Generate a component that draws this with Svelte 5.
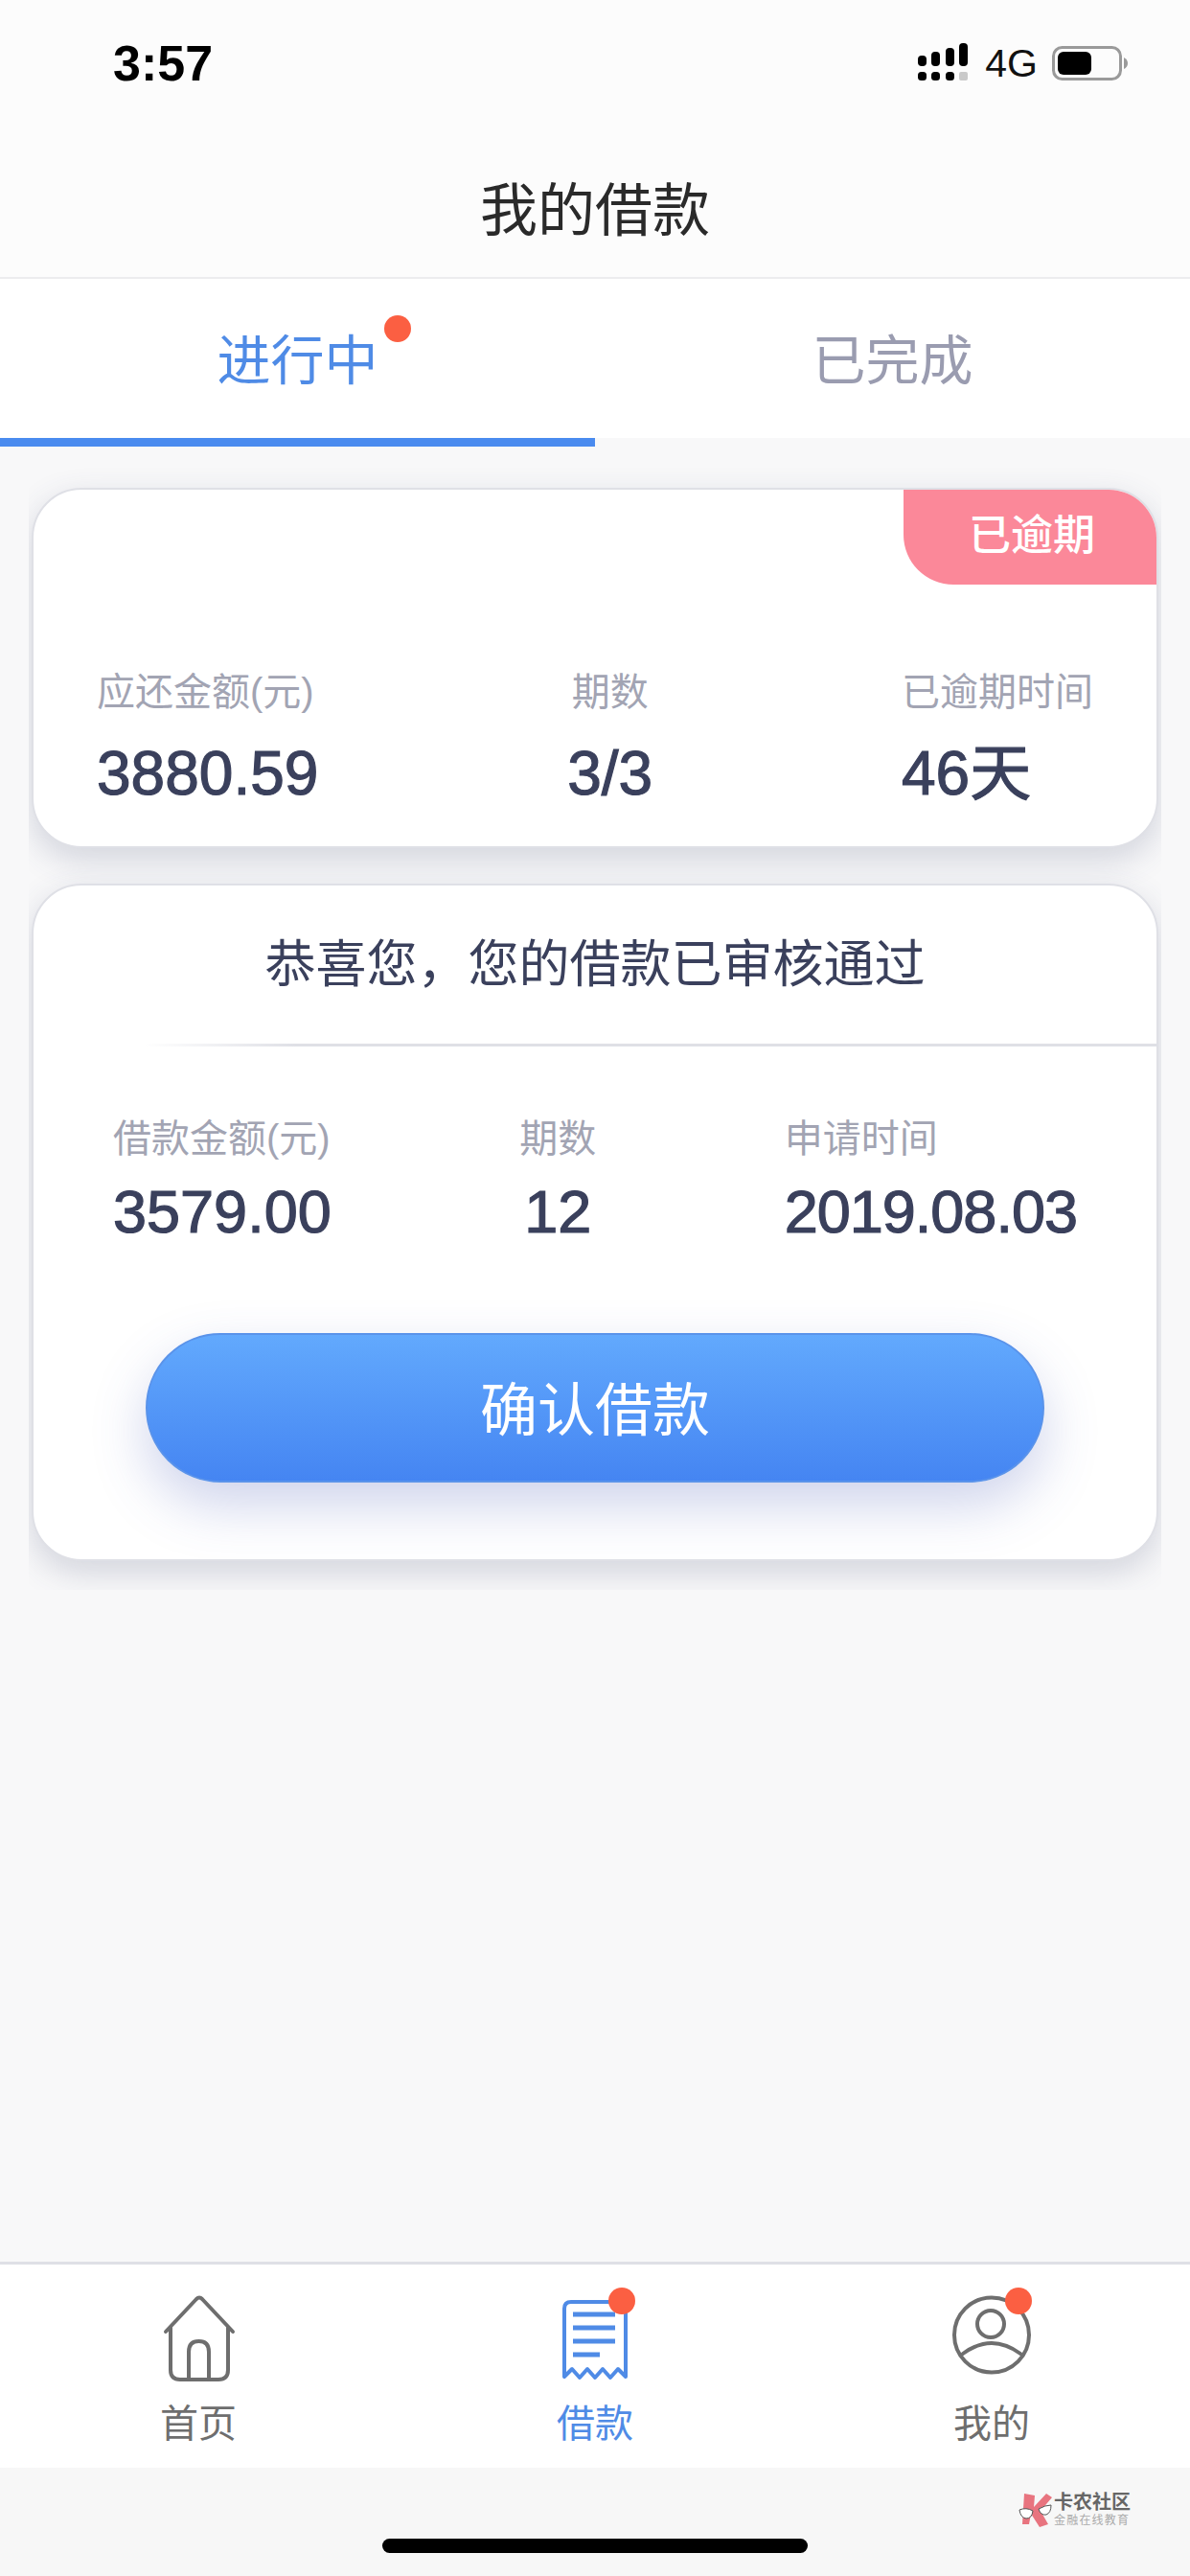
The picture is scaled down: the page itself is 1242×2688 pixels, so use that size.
<script>
	const summary = [
		{ label: '应还金额(元)', value: '3880.59' },
		{ label: '期数', value: '3/3', center: true },
		{ label: '已逾期时间', value: '46天' }
	];

	const loan = [
		{ label: '借款金额(元)', value: '3579.00' },
		{ label: '期数', value: '12', center: true },
		{ label: '申请时间', value: '2019.08.03' }
	];
</script>

<div class="page">
	<header class="top">
		<div class="status">
			<span class="time">3:57</span>
			<div class="status-right">
				<svg class="signal" width="52" height="42" viewBox="0 0 52 42">
					<rect x="0" y="13" width="9" height="11" rx="4" />
					<rect x="14" y="9" width="9" height="15" rx="4" />
					<rect x="29" y="5" width="9" height="19" rx="4" />
					<rect x="43" y="0" width="9" height="24" rx="4" />
					<rect x="0" y="30" width="9" height="9" rx="3.5" />
					<rect x="14" y="30" width="9" height="9" rx="3.5" />
					<rect x="29" y="30" width="9" height="9" rx="3.5" />
					<rect x="43" y="30" width="9" height="9" rx="2" fill="#c9c9c9" />
				</svg>
				<span class="net">4G</span>
				<svg class="battery" width="80" height="36" viewBox="0 0 80 36">
					<rect x="1.5" y="1.5" width="70" height="33" rx="9" fill="none" stroke="#9a9a9a" stroke-width="3" />
					<rect x="6" y="6" width="35" height="24" rx="6" fill="#000" />
					<path d="M75 12 Q79 14 79 18 Q79 22 75 24 Z" fill="#9a9a9a" />
				</svg>
			</div>
		</div>
		<h1>我的借款</h1>
	</header>

	<nav class="tabs">
		<div class="tab active"><span class="tab-text">进行中<i class="dot tab-dot"></i></span></div>
		<div class="tab">已完成</div>
	</nav>
	<div class="indicator"></div>

	<div class="list">
		<section class="card summary">
			<div class="badge">已逾期</div>
			<div class="stats">
				{#each summary as item}
					<div class="stat" class:center={item.center}>
						<div class="label">{item.label}</div>
						<div class="value">{item.value}</div>
					</div>
				{/each}
			</div>
		</section>

		<section class="card approved">
			<h2>恭喜您，您的借款已审核通过</h2>
			<div class="divider"></div>
			<div class="stats tight">
				{#each loan as item}
					<div class="stat" class:center={item.center}>
						<div class="label">{item.label}</div>
						<div class="value">{item.value}</div>
					</div>
				{/each}
			</div>
			<button class="confirm" type="button">确认借款</button>
		</section>
	</div>

	<div class="spacer"></div>

	<footer class="tabbar">
		<div class="nav-item">
			<div class="nav-icon">
				<svg width="88" height="92" viewBox="0 0 88 92" fill="none" stroke="#6e6e6e" stroke-width="4" stroke-linejoin="round" stroke-linecap="round">
					<path d="M10 38 L42 4 Q45 1 48 4 L80 38" />
					<path d="M15 34 V78 Q15 88 25 88 H65 Q75 88 75 78 V34" />
					<path d="M34 88 V59 Q34 48 44.5 48 Q55 48 55 59 V88" />
				</svg>
			</div>
			<span>首页</span>
		</div>
		<div class="nav-item active">
			<div class="nav-icon">
				<svg width="88" height="92" viewBox="0 0 88 92" fill="none" stroke="#4f8be6" stroke-width="4" stroke-linejoin="round">
					<path d="M12 85 V14 Q12 7 19 7 H72 Q76 7 76 11 V85 L68 77 L60 86 L52 77 L44 86 L36 77 L28 86 L20 77 Z" />
					<path d="M21 20 H65 M21 34 H65 M21 48 H65 M21 62 H49" stroke-width="5" />
				</svg>
				<i class="dot nav-dot"></i>
			</div>
			<span>借款</span>
		</div>
		<div class="nav-item">
			<div class="nav-icon">
				<svg width="88" height="92" viewBox="0 0 88 92" fill="none" stroke="#6e6e6e" stroke-width="4">
					<circle cx="44" cy="41.5" r="39" />
					<circle cx="43" cy="30" r="14" />
					<path d="M14 61 Q44 39 74 61" stroke-linecap="round" />
				</svg>
				<i class="dot nav-dot"></i>
			</div>
			<span>我的</span>
		</div>
	</footer>

	<div class="bottom">
		<div class="home-bar"></div>
		<div class="watermark">
			<svg width="36" height="36" viewBox="0 0 36 36">
				<path d="M6 1 L17 3 L16 15 L29 1 L35 5 L23 19 L31 33 L22 36 L13 22 L11 33 L4 33 Z" fill="#e8747f" />
				<path d="M1 18 Q8 15 15 19 Q14 27 8 27 Q2 26 1 18 Z M21 17 Q28 13 34 13 Q34 21 29 23 Q23 24 21 17 Z" fill="#fff" stroke="#555" stroke-width="1" />
			</svg>
			<div class="mark-text">
				<b>卡农社区</b>
				<small>金融在线教育</small>
			</div>
		</div>
	</div>
</div>

<style>
	:global(body) {
		margin: 0;
		background: #f8f8f9;
	}

	.page {
		width: 1242px;
		min-height: 2688px;
		display: flex;
		flex-direction: column;
		font-family: 'Liberation Sans', 'Noto Sans CJK SC', sans-serif;
		background: #f8f8f9;
	}

	.top {
		height: 289px;
		background: #fcfcfc;
		border-bottom: 2px solid #ececee;
	}

	.status {
		height: 132px;
		display: flex;
		align-items: center;
		justify-content: space-between;
		padding: 0 64px 0 118px;
	}

	.time {
		font-size: 52px;
		font-weight: 700;
		color: #000;
	}

	.status-right {
		display: flex;
		align-items: center;
	}

	.signal {
		margin-right: 18px;
	}

	.net {
		font-size: 41px;
		color: #111;
		margin-right: 15px;
	}

	h1 {
		margin: 45px 0 0;
		text-align: center;
		font-size: 60px;
		line-height: 88px;
		font-weight: 400;
		color: #2a2a2a;
	}

	.tabs {
		display: flex;
		height: 166px;
		background: #fff;
	}

	.tab {
		flex: 1;
		display: flex;
		align-items: center;
		justify-content: center;
		padding-bottom: 6px;
		font-size: 56px;
		color: #9a9cb0;
	}

	.tab.active {
		color: #4f8be6;
	}

	.tab-text {
		position: relative;
	}

	.dot {
		position: absolute;
		width: 28px;
		height: 28px;
		border-radius: 50%;
		background: #fb5f42;
	}

	.tab-dot {
		top: -2px;
		right: -34px;
	}

	.indicator {
		width: 621px;
		height: 9px;
		background: #4a8bef;
	}

	.list {
		margin: 0 30px;
		padding: 43px 3px 30px;
		overflow: hidden;
		display: flex;
		flex-direction: column;
		gap: 37px;
	}

	.card {
		position: relative;
		background: #fff;
		border: 2px solid #dfe0e6;
		border-radius: 52px;
		box-shadow: 0 12px 34px rgba(60, 70, 110, 0.2);
		overflow: hidden;
	}

	.summary {
		height: 186px;
		padding-top: 186px;
	}

	.badge {
		position: absolute;
		top: 0;
		right: 0;
		width: 264px;
		height: 99px;
		box-sizing: border-box;
		padding-left: 68px;
		line-height: 96px;
		font-size: 44px;
		font-weight: 500;
		color: #fff;
		background: #fb8899;
		border-radius: 0 0 0 52px;
	}

	.stats {
		display: flex;
		justify-content: space-between;
		padding: 0 66px;
	}

	.stats.tight {
		padding: 71px 83px 0;
	}

	.stat.center {
		text-align: center;
	}

	.label {
		font-size: 40px;
		line-height: 50px;
		color: #a2a4b3;
	}

	.value {
		margin-top: 25px;
		font-size: 64px;
		line-height: 70px;
		color: #3a405c;
		-webkit-text-stroke: 1.2px #3a405c;
	}

	.tight .value {
		margin-top: 16px;
		font-size: 63px;
	}

	.tight .stat:last-child .value {
		letter-spacing: -1px;
	}

	h2 {
		margin: 43px 0 0;
		text-align: center;
		font-size: 53px;
		line-height: 80px;
		font-weight: 400;
		color: #3a405c;
	}

	.divider {
		height: 3px;
		margin: 42px 0 0 115px;
		background: linear-gradient(90deg, #fff, #dfe0e6 15%);
	}

	.confirm {
		display: block;
		width: 938px;
		height: 156px;
		margin: 92px auto 80px;
		padding: 0 0 6px;
		border: 2px solid #5a93ea;
		border-radius: 78px;
		background: linear-gradient(180deg, #62a9fd, #4585f2);
		box-shadow: 0 24px 56px rgba(70, 90, 180, 0.26);
		color: #fff;
		font-family: inherit;
		font-size: 60px;
	}

	.spacer {
		flex: 1;
	}

	.tabbar {
		display: flex;
		height: 212px;
		background: #fff;
		border-top: 3px solid #dfe0e6;
	}

	.nav-item {
		flex: 1;
		display: flex;
		flex-direction: column;
		align-items: center;
		font-size: 40px;
		line-height: 50px;
		color: #6e6e6e;
	}

	.nav-item.active {
		color: #4f8be6;
	}

	.nav-icon {
		position: relative;
		width: 88px;
		height: 92px;
		margin: 32px 0 17px;
	}

	.nav-icon svg {
		display: block;
	}

	.nav-dot {
		top: -8px;
		left: 58px;
	}

	.bottom {
		position: relative;
		height: 113px;
		display: flex;
		align-items: flex-end;
		justify-content: center;
		background: #f7f7f7;
		padding-bottom: 24px;
		box-sizing: border-box;
	}

	.home-bar {
		width: 444px;
		height: 15px;
		border-radius: 8px;
		background: #000;
	}

	.watermark {
		position: absolute;
		top: 26px;
		left: 1063px;
		display: flex;
		gap: 1px;
	}

	.mark-text {
		display: flex;
		flex-direction: column;
		line-height: 1;
	}

	.mark-text b {
		font-size: 20px;
		color: #666;
	}

	.mark-text small {
		margin-top: 3px;
		font-size: 12px;
		letter-spacing: 1.2px;
		color: #aaa;
	}
</style>
